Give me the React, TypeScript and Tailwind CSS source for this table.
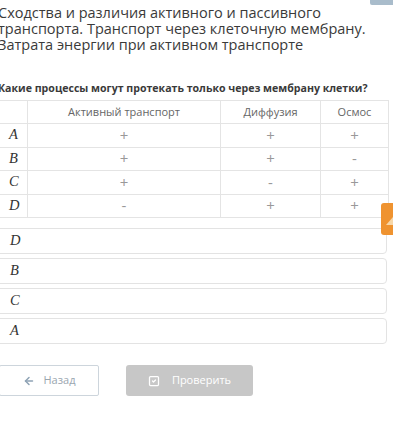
import { ArrowLeft, SquareCheck } from 'lucide-react';

const rows = [
  { label: 'A', cells: ['+', '+', '+'] },
  { label: 'B', cells: ['+', '+', '-'] },
  { label: 'C', cells: ['+', '-', '+'] },
  { label: 'D', cells: ['-', '+', '+'] },
];

const answers = ['D', 'B', 'C', 'A'];

// буква варианта в "математическом" начертании
function MathLetter({ children }: { children: string }) {
  return (
    <span className="font-['Liberation_Serif',serif] [font-style:italic] text-[14.5px] text-[#333]">{children}</span>
  );
}

export default function App() {
  return (
    <div className="relative w-[393px] h-[429px] overflow-hidden bg-white font-['Open_Sans',sans-serif] text-[#333]">
      {/* кусок кнопки сверху справа */}
      <div className="absolute right-0 top-0 w-[23px] h-[5px] bg-[#a9bccb] rounded-bl-[2px]" />

      {/* оранжевая вкладка сбоку */}
      <div className="absolute right-0 top-[203px] w-[12px] h-[32px] bg-[#ef9330] rounded-tl-[3px] rounded-bl-[3px] z-10">
        <div className="absolute left-[5px] top-[14px] w-0 h-0 border-l-[7px] border-l-transparent border-b-[8px] border-b-[#f7d7a8]" />
      </div>

      <h1 className="ml-[-2px] pt-[5px] text-[14.5px] leading-[16px] text-[#3a3a3a]">
        Сходства и различия активного и пассивного транспорта. Транспорт через клеточную мембрану.
        Затрата энергии при активном транспорте
      </h1>

      <p className="ml-[-2px] mt-[28px] text-[10.6px] leading-[14px] font-bold text-[#3a3a3a]">
        Какие процессы могут протекать только через мембрану клетки?
      </p>

      <table className="mt-[5px] ml-[-1px] w-[389px] border-collapse table-fixed text-[11px] text-[#666]">
        <colgroup>
          <col className="w-[28px]" />
          <col className="w-[193px]" />
          <col className="w-[100px]" />
          <col className="w-[68px]" />
        </colgroup>
        <thead>
          <tr className="h-[23px]">
            <th className="border border-[#e4e4e4] font-normal" />
            <th className="border border-[#e4e4e4] font-normal">Активный транспорт</th>
            <th className="border border-[#e4e4e4] font-normal">Диффузия</th>
            <th className="border border-[#e4e4e4] font-normal">Осмос</th>
          </tr>
        </thead>
        <tbody>
          {rows.map((row) => (
            <tr key={row.label} className="h-[23.5px]">
              <td className="border border-[#e4e4e4] pl-[9px]">
                <MathLetter>{row.label}</MathLetter>
              </td>
              {row.cells.map((c, i) => (
                <td
                  key={i}
                  className="border border-[#e4e4e4] text-center text-[#999] text-[15px] leading-[15px]"
                >
                  {c}
                </td>
              ))}
            </tr>
          ))}
        </tbody>
      </table>

      <div className="mt-[10px] ml-[-6px] w-[393px] flex flex-col gap-[4px]">
        {answers.map((a) => (
          <div key={a} className="h-[26px] border border-[#e3e3e3] rounded-[4px] flex items-center pl-[15px]">
            <MathLetter>{a}</MathLetter>
          </div>
        ))}
      </div>

      <div className="mt-[21px] flex items-center gap-[27px]">
        <button className="ml-[-1px] w-[100px] h-[31px] border border-[#cdd5dc] rounded-[2px] bg-white flex items-center justify-center gap-[9px] text-[11px] text-[#9aa6b0]">
          <ArrowLeft size={12} strokeWidth={3} className="text-[#8ea3b5]" />
          Назад
        </button>
        <button className="w-[127px] h-[31px] rounded-[3px] bg-[#c7c7c7] flex items-center justify-center gap-[12px] text-[11px] text-white">
          <SquareCheck size={12} strokeWidth={2.5} />
          Проверить
        </button>
      </div>
    </div>
  );
}
